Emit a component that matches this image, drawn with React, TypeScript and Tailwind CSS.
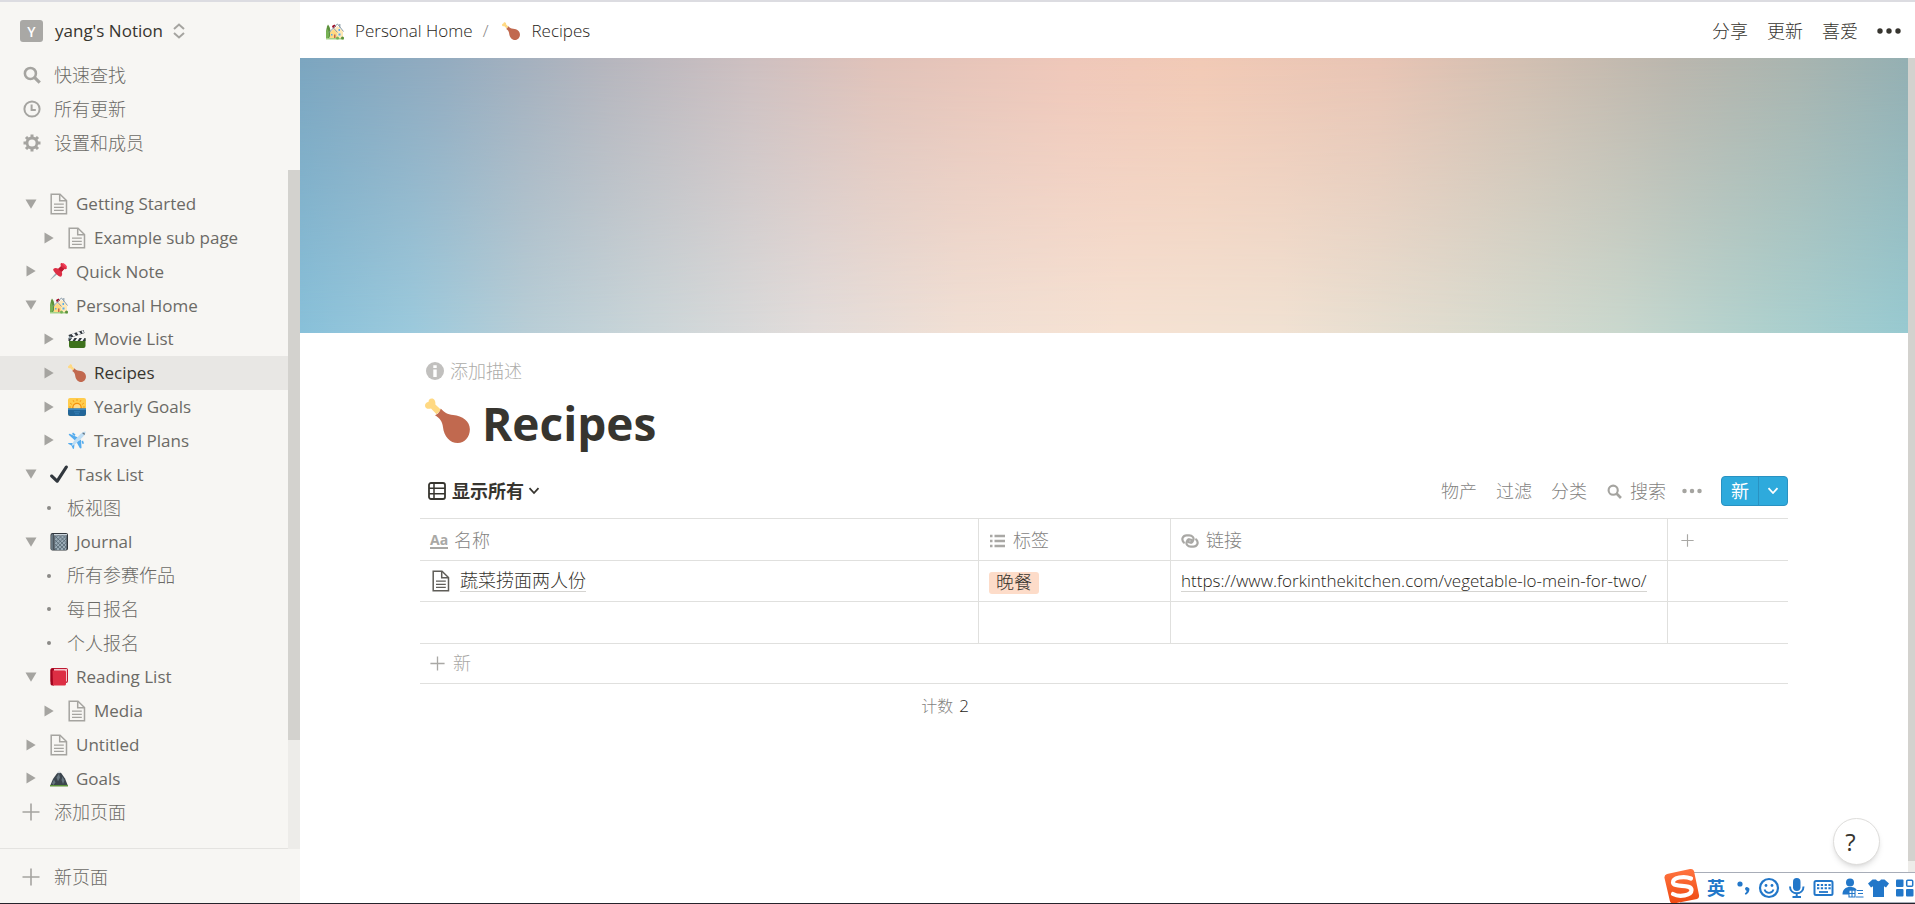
import type { ReactNode } from "react";

/* ---------- line icons ---------- */

const SearchIcon = ({ className }: { className: string }) => (
  <svg viewBox="0 0 17 17" className={className} fill="none" stroke="currentColor" aria-hidden="true">
    <circle cx="7" cy="7" r="5.2" strokeWidth="2.4" />
    <path d="M10.8 10.8 15.8 15.8" strokeWidth="3" />
  </svg>
);

const ClockIcon = () => (
  <svg viewBox="0 0 18 18" className="size-[18px]" fill="none" stroke="currentColor" aria-hidden="true">
    <circle cx="9" cy="9" r="7.6" strokeWidth="2" />
    <path d="M8.6 4.6V10H12.8" strokeWidth="2" />
  </svg>
);

const GearIcon = () => (
  <svg viewBox="0 0 18 18" className="size-[18px]" fill="none" stroke="currentColor" aria-hidden="true">
    <circle cx="9" cy="9" r="5" strokeWidth="2.8" />
    <path
      d="M9 .5V4M9 14v3.5M.5 9H4M14 9h3.500M3 3l2.400 2.400M12.600 12.600 15 15M3 15l2.400-2.400M12.600 5.400 15 3"
      strokeWidth="3"
    />
  </svg>
);

const PlusIcon = ({ className }: { className: string }) => (
  <svg viewBox="0 0 18 18" className={className} stroke="currentColor" strokeWidth="1.6" aria-hidden="true">
    <path d="M9 .5v17M.5 9h17" />
  </svg>
);

const PageIcon = ({ className }: { className: string }) => (
  <svg viewBox="0 0 18 22" className={className} fill="none" stroke="currentColor" strokeWidth="1.5" aria-hidden="true">
    <path d="M1.200 1.200H10l6.500 6.300V20.700H1.200Z" />
    <path d="M9.700 1.500V7.800H16.300" />
    <path d="M4 11.200h9.800M4 14.300h9.800M4 17.400h9.800" strokeWidth="1.3" />
  </svg>
);

const ArrowDown = () => (
  <svg viewBox="0 0 12 10" className="h-[10px] w-3" fill="currentColor" aria-hidden="true">
    <path d="M.5 .5h11L6 9.700Z" />
  </svg>
);

const ArrowRight = () => (
  <svg viewBox="0 0 10 12" className="ml-px h-3 w-[10px]" fill="currentColor" aria-hidden="true">
    <path d="M.5 .5v11L9.700 6Z" />
  </svg>
);

const Chevron = ({ className }: { className: string }) => (
  <svg viewBox="0 0 12 8" className={className} fill="none" stroke="currentColor" strokeWidth="1.8" aria-hidden="true">
    <path d="M1.500 1.200 6 6l4.500-4.800" />
  </svg>
);

const Dots = ({ className }: { className: string }) => (
  <svg viewBox="0 0 24 6" className={className} fill="currentColor" aria-hidden="true">
    <circle cx="3" cy="3" r="2.700" />
    <circle cx="12" cy="3" r="2.700" />
    <circle cx="21" cy="3" r="2.700" />
  </svg>
);

/* ---------- pictograms ---------- */

const emojiSize = "size-[18px] shrink-0";

const Drumstick = ({ className }: { className: string }) => (
  <svg viewBox="0 0 36 36" className={className} aria-hidden="true">
    <path
      fill="#ffd983"
      d="M13 9.500 8.300 5.200C8.700 2.500 7.400.3 5.400.3 3.700.3 2.700 1.500 2.800 3.200 1.100 3.300 0 4.600 0 6.200 0 8.300 2.300 9.200 4.800 8.400L9.200 13Z"
    />
    <path
      fill="#c1694f"
      d="M12.600 8.300c2.600 3 5.300 4.800 9.900 5.200C30 14 35.900 18.600 35.900 25c0 6.200-4.200 11-9.700 11-6.200 0-11.100-5.500-11.800-12.700-.4-4.200-2.500-7.200-6.600-9.700 1.600-.2 4.200-2.200 4.800-5.300Z"
    />
  </svg>
);

const House = () => (
  <svg viewBox="0 0 36 36" className={emojiSize} aria-hidden="true">
    <path fill="#a6d388" d="M0 31h36v4H0z" />
    <path fill="#5c913b" d="M4 5c3 3 5 9 5 16 0 5-1 9-3 11H1C-1 26 0 11 4 5Z" />
    <path fill="#77b255" d="M3 14c2 3 3 6 3 10 0 4-1 7-2 8H0V20c1-3 2-5 3-6Z" />
    <path fill="#ffe8b6" d="M13 18 23 8l11 11v13H13Z" />
    <path fill="#ffd983" d="M8 21l7-7 7 7v11H8Z" />
    <path fill="#a0041e" d="m12 8 5-3 3 4-6 4Z" />
    <path fill="#a7b3bc" d="M26 4h3v7h-3z" />
    <path fill="none" stroke="#8899a6" strokeWidth="2" d="m6 21 9-9 8 9M15 11l8-7 12 15" />
    <path fill="#55acee" d="M25 14h3v4h-3zM25 23h4v4h-4zM10 24h3v3h-3z" />
    <path fill="#c1694f" d="M16 25h3v7h-3z" />
    <circle cx="23" cy="32" r="3" fill="#77b255" />
    <circle cx="33" cy="32" r="3" fill="#5c913b" />
  </svg>
);

const Pin = () => (
  <svg viewBox="0 0 36 36" className={emojiSize} aria-hidden="true">
    <path fill="#99aab5" d="M15.500 17.500 1 34.500l-.5 1 1.500-.3 17-14.700Z" />
    <path
      fill="#dd2e44"
      d="M21.500 2.800c2-3.600 14.500 8 11.800 10.800-1.600 1-3.300.7-4.900.2l-4.900 5.500c1.400 4.400 1 8-1.500 9.900-3.100 2-17.900-11.700-15.300-15.400 2.600-2.600 6-2.300 9.900-.5L22 8.400c-.9-1.800-1.300-3.900-.5-5.600Z"
    />
    <path fill="#be1931" d="M16.600 13.300 22 8.400c2 2.200 4 4 6.400 5.400l-4.900 5.500c-2.800-1.400-5-3.300-6.900-6Z" />
    <ellipse cx="29.400" cy="6.400" rx="2" ry="6" transform="rotate(-45 29.400 6.400)" fill="#f4425c" />
  </svg>
);

const Clapper = () => (
  <svg viewBox="0 0 36 36" className={emojiSize} aria-hidden="true">
    <path fill="#3e721d" d="M2 17h33v15a4 4 0 0 1-4 4H5a4 4 0 0 1-3-4Z" />
    <path fill="#31373d" d="M1 10 31 0l2 6L3 16ZM1 16h34v6H1Z" />
    <path fill="#f5f8fa" d="m7 8 5-2 4 5-5 2ZM17 5l5-2 4 5-5 2ZM27 1.500l3-1 2 5-3 1ZM8 16h5l-4 6H4ZM18 16h5l-4 6h-5ZM28 16h5l-4 6h-5Z" />
    <circle cx="4" cy="15" r="2.500" fill="#99aab5" />
  </svg>
);

const Sunrise = () => (
  <svg viewBox="0 0 36 36" className={emojiSize} aria-hidden="true">
    <rect width="36" height="36" rx="4" fill="#ffcc4d" />
    <path fill="none" stroke="#f4900c" strokeWidth="1.500" d="M18 2v4M10 4l2 4M26 4l-2 4M4 10l4 3M32 10l-4 3M2 18h4M34 18h-4" />
    <circle cx="18" cy="19" r="9.500" fill="#f4900c" />
    <circle cx="18" cy="19" r="7" fill="#ffd983" />
    <path fill="#226699" d="M0 21h36v11a4 4 0 0 1-4 4H4a4 4 0 0 1-4-4Z" />
    <path fill="#3b88c3" d="M0 21h36v3H0z" />
    <path fill="#55acee" d="M12 27h12v1.500H12zM14 31h8v1.500h-8z" opacity=".5" />
  </svg>
);

const Plane = () => (
  <svg viewBox="0 0 36 36" className={emojiSize} aria-hidden="true">
    <path fill="#55acee" d="M20 13 3 5.500c-1.500 0-2 2-.5 3L14 19ZM17 22l6.500 12c1 1.500 3.500 1 3.500-1L26 17ZM9 24H1.500c-1.500 0-2 1.500-.5 2l6 3 2.500 6c.5 1.500 2.500 1 2.500-.5L13 27Z" />
    <path fill="#bdddf4" d="M8 29c-1-1 1-5 4-9L25 6c4-4 9-5.500 10-5 .8 1-.8 6-5 10.500L16 25c-4 3-7 5-8 4Z" />
    <path fill="#66757f" d="M28 4c2-1 4-1 5 0s.5 3-.5 4.500c-1-2-2.500-3.500-4.500-4.500Z" />
    <path fill="#55acee" d="m8 6 2-3 5 4-2 3ZM27 21l3-2 2 6-3 1Z" />
  </svg>
);

const Check = () => (
  <svg viewBox="0 0 36 36" className={emojiSize} aria-hidden="true">
    <path
      fill="#31373d"
      d="M34.500 1.500c-1.400-1-3.300-.7-4.200.7L13.700 27.500 5.300 19.700c-1.300-1.200-3.200-1.100-4.400.1-1.100 1.300-1.100 3.200.1 4.400l11.500 10.600c1.400 1.300 3.400.8 4.300-.5L35.400 5.700c.9-1.400.5-3.300-.9-4.200Z"
    />
  </svg>
);

const Notebook = () => (
  <svg viewBox="0 0 36 36" className={emojiSize} aria-hidden="true">
    <rect x="1" y="0" width="35" height="35" rx="4" fill="#31373d" />
    <path fill="#ccd6dd" d="M8 2h26v3H8z" />
    <path fill="#66757f" d="M2 5c0-2 2-3 3-3h2v32H4c-1 0-2-1-2-2Z" />
    <rect x="9" y="5" width="24" height="29" rx="2" fill="#99aab5" />
    <path stroke="#546572" strokeWidth="1.500" fill="none" d="m9 12 7-7M9 20 24 5M9 28 32 5M10 34l23-23M18 34l15-15M26 34l7-7M26 5l7 7M18 5l15 15M10 6l23 23M9 13l21 21M9 21l13 13M9 29l5 5" />
  </svg>
);

const RedBook = () => (
  <svg viewBox="0 0 36 36" className={emojiSize} aria-hidden="true">
    <rect x="1" y="0" width="35" height="30" rx="4" fill="#be1931" />
    <path fill="#f5c6ce" d="M7 2h27v25H7z" />
    <path fill="#a0041e" d="M1 4c0-2 2-3 4-3h3v34H5c-2 0-4-1-4-4Z" />
    <path fill="#dd2e44" d="M5 5h24a3 3 0 0 1 3 3v24a3 3 0 0 1-3 3H6Z" />
  </svg>
);

const Mountain = () => (
  <svg viewBox="0 0 36 36" className={emojiSize} aria-hidden="true">
    <path fill="#3b454d" d="M0 34 6 20 13 10l5-5 5 4 7 10 6 15Z" />
    <path fill="#e1e8ed" d="m18 3 4 5-2-1-2 2-2-2-3 3Z" />
    <path fill="#66757f" d="m18 9 2 8-4 8-3-8ZM25 15l4 8-3 7-3-8ZM8 21l3 6-4 5-3-3Z" />
    <path fill="#5c913b" d="M0 32h36v3H0z" />
  </svg>
);

const TreePage = () => <PageIcon className="h-[22px] w-[18px] shrink-0" />;

/* ---------- sidebar ---------- */

type Item = {
  label: string;
  icon?: ReactNode;
  state: "open" | "closed" | "view";
  nested?: boolean;
  active?: boolean;
};

const items: Item[] = [
  { label: "Getting Started", icon: <TreePage />, state: "open" },
  { label: "Example sub page", icon: <TreePage />, state: "closed", nested: true },
  { label: "Quick Note", icon: <Pin />, state: "closed" },
  { label: "Personal Home", icon: <House />, state: "open" },
  { label: "Movie List", icon: <Clapper />, state: "closed", nested: true },
  { label: "Recipes", icon: <Drumstick className={emojiSize} />, state: "closed", nested: true, active: true },
  { label: "Yearly Goals", icon: <Sunrise />, state: "closed", nested: true },
  { label: "Travel Plans", icon: <Plane />, state: "closed", nested: true },
  { label: "Task List", icon: <Check />, state: "open" },
  { label: "板视图", state: "view" },
  { label: "Journal", icon: <Notebook />, state: "open" },
  { label: "所有参赛作品", state: "view" },
  { label: "每日报名", state: "view" },
  { label: "个人报名", state: "view" },
  { label: "Reading List", icon: <RedBook />, state: "open" },
  { label: "Media", icon: <TreePage />, state: "closed", nested: true },
  { label: "Untitled", icon: <TreePage />, state: "closed" },
  { label: "Goals", icon: <Mountain />, state: "closed" },
];

function TreeRow({ item }: { item: Item }) {
  if (item.state === "view") {
    return (
      <li className="flex flex-1">
        <a href="#view" className="flex w-full items-center pl-[47px] text-[18px] font-light">
          <span className="mr-4 size-1 rounded-full bg-[#8b8a87]" />
          {item.label}
        </a>
      </li>
    );
  }
  return (
    <li className={item.active ? "flex flex-1 bg-[#e8e7e4]" : "flex flex-1"}>
      <button
        type="button"
        aria-label={"Toggle " + item.label}
        className={
          item.nested
            ? "flex w-[68px] shrink-0 items-center pl-[43px] text-[#a5a4a0]"
            : "flex w-[50px] shrink-0 items-center pl-[25px] text-[#a5a4a0]"
        }
      >
        {item.state === "open" ? <ArrowDown /> : <ArrowRight />}
      </button>
      <a href="#page" className="flex flex-1 items-center gap-2 text-[#a5a4a0]">
        {item.icon}
        <span className={item.active ? "font-medium text-[#37352f]" : "text-[#6b6a66]"}>{item.label}</span>
      </a>
    </li>
  );
}

function QuickLink({ icon, label }: { icon: ReactNode; label: string }) {
  return (
    <button type="button" className="flex h-[34px] w-full items-center text-left">
      <span className="flex w-[54px] items-center pl-[23px] text-[#a5a4a0]">{icon}</span>
      <span className="text-[18px] font-light">{label}</span>
    </button>
  );
}

function Sidebar() {
  return (
    <aside className="flex w-[300px] shrink-0 flex-col bg-[#f7f6f3] text-[#6b6a66]">
      <button type="button" className="flex h-14 items-center pt-[2px] pl-5 text-left">
        <span className="flex h-[22px] w-[23px] items-center justify-center rounded-[3px] bg-[#a9a8a5] text-[14px] font-semibold text-white">
          Y
        </span>
        <span className="ml-3 font-medium text-[#37352f]">yang's Notion</span>
        <svg viewBox="0 0 12 16" className="ml-[10px] h-4 w-3" fill="none" stroke="#a5a4a0" strokeWidth="2" aria-hidden="true">
          <path d="M1 6l5-4.500L11 6M1 10l5 4.500L11 10" />
        </svg>
      </button>
      <nav aria-label="Quick links">
        <QuickLink icon={<SearchIcon className="size-[18px]" />} label="快速查找" />
        <QuickLink icon={<ClockIcon />} label="所有更新" />
        <QuickLink icon={<GearIcon />} label="设置和成员" />
      </nav>
      <div className="mt-[10px] flex min-h-0 flex-1">
        <div className="flex flex-1 flex-col border-b border-[#e4e3e0] pt-[17px] pb-[19px]">
          <ul className="flex flex-[18] flex-col">
            {items.map((item) => (
              <TreeRow key={item.label} item={item} />
            ))}
          </ul>
          <button type="button" className="flex flex-1 items-center text-left">
            <span className="w-[54px] pl-[22px] text-[#a5a4a0]">
              <PlusIcon className="size-[18px]" />
            </span>
            <span className="text-[18px] font-light">添加页面</span>
          </button>
        </div>
        <div className="w-3 bg-[#edece9]">
          <div className="h-[84%] bg-[#d3d2ce]" />
        </div>
      </div>
      <button type="button" className="flex h-[54px] items-center pt-[2px] text-left">
        <span className="w-[54px] pl-[22px] text-[#a5a4a0]">
          <PlusIcon className="size-[18px]" />
        </span>
        <span className="text-[18px] font-light">新页面</span>
      </button>
    </aside>
  );
}

/* ---------- main area ---------- */

function TopBar() {
  return (
    <header className="flex h-14 shrink-0 items-center bg-white pt-[2px] pr-[14px] pl-[26px] text-[#37352f]">
      <a href="#home" className="flex items-center gap-[11px] font-light text-[#1f1d18]">
        <House />
        Personal Home
      </a>
      <span className="mx-[10px] font-light text-[#84837f]">/</span>
      <a href="#recipes" className="ml-1 flex items-center gap-[11px] font-light text-[#1f1d18]">
        <Drumstick className={emojiSize} />
        Recipes
      </a>
      <div className="ml-auto flex items-center gap-[19px] text-[18px] font-light">
        <button type="button">分享</button>
        <button type="button">更新</button>
        <button type="button">喜爱</button>
        <button type="button" aria-label="More">
          <Dots className="h-6 w-6" />
        </button>
      </div>
    </header>
  );
}

function Cover() {
  return (
    <div className="h-[275px] bg-[linear-gradient(90deg,#89c1da_0%,#9ccadd_7%,#b8ced7_14%,#ccd6d9_22%,#e3dddb_32%,#f1e0d5_41%,#f6e2d3_51%,#f1e2d3_61%,#e0ddd0_71%,#cad8ce_82%,#afd1ce_91%,#98cad1_100%)]">
      <div className="h-full bg-[linear-gradient(90deg,#7ba5bf_0%,#93abbf_9%,#b5b5bd_19%,#cdbfc0_28%,#e0c2b9_36%,#efc7b9_48%,#f1c9b5_56%,#e8c4b4_67%,#d2bfb1_76%,#bbb6ad_85%,#a9b4af_93%,#94afb2_100%)] [mask-image:linear-gradient(to_bottom,black,transparent)]" />
    </div>
  );
}

function Toolbar() {
  return (
    <div className="flex h-[54px] items-center text-[18px] font-light text-[#84837f]">
      <button type="button" className="flex items-center pl-2 text-[#37352f]">
        <svg viewBox="0 0 18 18" className="size-[18px]" fill="none" stroke="currentColor" strokeWidth="1.800" aria-hidden="true">
          <rect x="1" y="1" width="16" height="16" rx="2" />
          <path d="M6 1v16M1 6.300h16M1 11.700h16" strokeWidth="1.500" />
        </svg>
        <span className="ml-[6px] font-bold">显示所有</span>
        <Chevron className="ml-1 h-2 w-3" />
      </button>
      <div className="ml-auto flex items-center">
        <button type="button" className="mr-[19px]">物产</button>
        <button type="button" className="mr-[19px]">过滤</button>
        <button type="button" className="mr-5">分类</button>
        <button type="button" className="mr-4 flex items-center gap-2">
          <SearchIcon className="size-[15px] text-[#a5a4a0]" />
          搜索
        </button>
        <button type="button" aria-label="More view options" className="mr-[19px] text-[#a5a4a0]">
          <Dots className="h-5 w-5" />
        </button>
        <div className="flex h-[30px] overflow-hidden rounded-[4px] border border-[#2992c2] bg-[#2eaadc] text-white">
          <button type="button" className="w-[37px] border-r border-[#2992c2] font-normal">
            新
          </button>
          <button type="button" aria-label="New from template" className="flex w-[28px] items-center justify-center">
            <Chevron className="h-2 w-3" />
          </button>
        </div>
      </div>
    </div>
  );
}

const headCell = "border-r border-b border-[#e0e0de] p-0 pt-[2px] text-left font-light";
const bodyCell = "h-[41px] border-r border-b border-[#e0e0de] p-0";

function RecipesTable() {
  return (
    <table className="w-full table-fixed border-separate border-spacing-0 border-t border-[#e0e0de]">
      <colgroup>
        <col />
        <col className="w-[192px]" />
        <col className="w-[497px]" />
        <col className="w-[120px]" />
      </colgroup>
      <thead className="text-[18px] text-[#84837f]">
        <tr className="h-[42px]">
          <th scope="col" className={headCell}>
            <span className="flex items-center gap-[6px] pl-[10px]">
              <span className="w-[18px] border-b-2 border-[#a9a8a5] text-[14px] leading-[14px] font-bold text-[#a9a8a5]">Aa</span>
              名称
            </span>
          </th>
          <th scope="col" className={headCell}>
            <span className="flex items-center gap-2 pl-[11px]">
              <svg viewBox="0 0 15 14" className="h-[14px] w-[15px]" fill="none" stroke="#a9a8a5" strokeWidth="2.400" aria-hidden="true">
                <path d="M0 2h2.500M4.500 2H15M0 7h2.500M4.500 7H15M0 12h2.500M4.500 12H15" />
              </svg>
              标签
            </span>
          </th>
          <th scope="col" className={headCell}>
            <span className="flex items-center gap-[7px] pl-[10px]">
              <svg viewBox="0 0 18 14" className="h-[14px] w-[18px]" fill="none" stroke="#a9a8a5" strokeWidth="2.200" strokeLinecap="round" aria-hidden="true">
                <path d="M2.800 8.600C-.2 5.200 2 1.400 5.600 1.400h2.600c3 0 5.200 2.400 4 4.800-.9 1.900-3.600 3-5.200 1.500-1-.9-.4-2.200.8-2.500" />
                <path d="M15.200 5.400c3 3.400.8 7.200-2.800 7.200H9.800c-3 0-5.200-2.400-4-4.800.9-1.900 3.600-3 5.200-1.500 1 .9.4 2.200-.8 2.500" />
              </svg>
              链接
            </span>
          </th>
          <th className="border-b border-[#e0e0de] p-0 pt-[2px] text-left">
            <button type="button" aria-label="Add column" className="flex pl-[13px] text-[#a9a8a5]">
              <PlusIcon className="size-[13px]" />
            </button>
          </th>
        </tr>
      </thead>
      <tbody className="text-[#37352f]">
        <tr>
          <td className={bodyCell}>
            <a href="#recipe" className="flex items-center gap-[10px] pl-3 text-[18px] font-light">
              <PageIcon className="h-[22px] w-[18px] text-[#5f5d58]" />
              <span className="border-b border-[#d5d4d1] leading-[21px]">蔬菜捞面两人份</span>
            </a>
          </td>
          <td className={bodyCell}>
            <span className="ml-[10px] inline-flex h-[22px] items-center rounded-[3px] bg-[#fddcc9] px-[7px] align-middle text-[18px] font-light">
              晚餐
            </span>
          </td>
          <td className={bodyCell + " overflow-hidden whitespace-nowrap"}>
            <a
              href="https://www.forkinthekitchen.com/vegetable-lo-mein-for-two/"
              className="ml-[10px] inline-block border-b border-[#d5d4d1] leading-[20px] font-light text-[#1f1d18]"
            >
              https://www.forkinthekitchen.com/vegetable-lo-mein-for-two/
            </a>
          </td>
          <td className="border-b border-[#e0e0de]" />
        </tr>
        <tr>
          <td className="h-[42px] border-r border-b border-[#e0e0de]" />
          <td className="border-r border-b border-[#e0e0de]" />
          <td className="border-r border-b border-[#e0e0de]" />
          <td className="border-b border-[#e0e0de]" />
        </tr>
        <tr>
          <td colSpan={4} className="h-10 border-b border-[#e0e0de] p-0">
            <button type="button" className="flex items-center gap-2 pl-[10px] text-[18px] font-light text-[#a9a8a5]">
              <PlusIcon className="size-[15px]" />新
            </button>
          </td>
        </tr>
      </tbody>
      <tfoot>
        <tr>
          <td className="h-11 p-0 pr-[10px] text-right font-light text-[#1f1d18]">
            <span className="mr-[6px] text-[16px] text-[#84837f]">计数</span>2
          </td>
          <td colSpan={3} />
        </tr>
      </tfoot>
    </table>
  );
}

/* ---------- input method bar ---------- */

function InputBar() {
  return (
    <div className="absolute right-0 bottom-0 flex h-[31px] w-[235px] items-center border-t border-b border-[#a8adb8] bg-white pl-[27px] text-[#2277c9]">
      <svg viewBox="0 0 38 36" className="absolute bottom-[-2px] left-[-17px] h-9 w-[38px]" aria-hidden="true">
        <defs>
          <linearGradient id="ime" x1="0" y1="0" x2="0" y2="1">
            <stop offset="0" stopColor="#ff7440" />
            <stop offset="1" stopColor="#ee4a12" />
          </linearGradient>
        </defs>
        <path fill="url(#ime)" d="M4 6 27 1q3-.6 4 2l5 24q.5 3-2 4L11 35.500q-3 .6-4-2L1.500 10Q1 7 4 6Z" />
        <path
          d="M28 10.500C21 7.500 9.500 9.500 10 14.500c.6 5.500 18.500 1 18.500 7.500 0 5.500-12 7.500-18.500 4"
          fill="none"
          stroke="white"
          strokeWidth="4.200"
          strokeLinecap="round"
        />
      </svg>
      <span className="w-[29px] text-[18px] leading-none font-bold">英</span>
      <svg viewBox="0 0 179 30" className="h-[30px] w-[179px] shrink-0" fill="currentColor" aria-hidden="true">
        <circle cx="4" cy="11" r="2.600" />
        <path d="M9 15.500a2.300 2.300 0 1 1 4.200 2.200c-.6 2-2 3.400-3.700 4l-.7-1.300c1.200-.6 1.800-1.500 1.800-2.600-.9-.4-1.600-1.300-1.600-2.300Z" />
        <circle cx="33" cy="15" r="9" fill="none" stroke="currentColor" strokeWidth="2.200" />
        <circle cx="30" cy="12.500" r="1.400" />
        <circle cx="36" cy="12.500" r="1.400" />
        <path d="M28.500 16.500c1.500 4.500 7.500 4.500 9 0" fill="none" stroke="currentColor" strokeWidth="1.800" />
        <rect x="57" y="5" width="7.500" height="13" rx="3.700" />
        <path d="M54 13.500c0 9 13.500 9 13.500 0M60.700 20.500v3.500M56.500 24h8.500" fill="none" stroke="currentColor" strokeWidth="2" />
        <rect x="78.500" y="8" width="18" height="14" rx="1.500" fill="none" stroke="currentColor" strokeWidth="2" />
        <path d="M81 12h14M81 15.300h14" stroke="currentColor" strokeWidth="2" strokeDasharray="2.300 1.500" />
        <path d="M83 19h9" stroke="currentColor" strokeWidth="1.800" />
        <circle cx="114" cy="9.500" r="4" />
        <path d="M106.500 21.500c0-5 3-7.500 7.500-7.500s6 1.500 7 3.500h-8v4Z" />
        <path d="M113 17h6v7h-6ZM116 17v7M113 20.500h6M121 17.500h6M122 20.500h5M120 24h7.500" fill="none" stroke="currentColor" strokeWidth="1.100" />
        <path d="M136.500 6.500h3.500c1.500 2.200 3.500 2.200 5 0h3.500l4.500 4-3 4-2-1.300V24h-11V13.200l-2 1.300-3-4Z" />
        <rect x="160" y="6.500" width="7.500" height="7.500" rx="1" />
        <rect x="160" y="16" width="7.500" height="7.500" rx="1" />
        <rect x="170" y="16" width="7.500" height="7.500" rx="1" />
        <rect x="170.700" y="7.200" width="6" height="6" rx="1" fill="none" stroke="currentColor" strokeWidth="1.500" />
      </svg>
    </div>
  );
}

export default function App() {
  return (
    <div className="relative flex h-screen overflow-hidden border-t-2 border-b border-t-[#dcdce1] border-b-[#26242c] bg-white font-['Open_Sans','Noto_Sans_CJK_SC',sans-serif] text-[17px]">
      <Sidebar />
      <main className="flex min-w-0 flex-1 flex-col">
        <TopBar />
        <div className="flex min-h-0 flex-1">
          <div className="min-w-0 flex-1">
            <Cover />
            <div className="px-[120px] pt-[22px]">
              <button type="button" className="flex h-8 items-center gap-[6px] pl-[6px] text-[18px] font-light text-[#acaba8]">
                <svg viewBox="0 0 18 18" className="size-[18px]" aria-hidden="true">
                  <circle cx="9" cy="9" r="9" fill="#c1c0be" />
                  <path fill="white" d="M7.300 7.500h3.400V15H7.300zM7.300 3.200h3.400v2.800H7.300z" />
                </svg>
                添加描述
              </button>
              <div className="flex h-[77px] items-start gap-3 pt-[11px] pl-[5px]">
                <Drumstick className="size-[45px] shrink-0" />
                <h1 className="text-[46px] leading-[50px] font-bold text-[#37352f]">Recipes</h1>
              </div>
              <Toolbar />
              <RecipesTable />
            </div>
          </div>
          <div className="w-[7px] bg-[#edece9]">
            <div className="h-[95%] bg-[#d3d2ce]" />
          </div>
        </div>
      </main>
      <button
        type="button"
        aria-label="Help"
        className="absolute right-[35px] bottom-[38px] size-[47px] rounded-full border border-[#dedddb] bg-white pr-3 text-[24px] text-[#37352f] shadow-md"
      >
        ?
      </button>
      <InputBar />
    </div>
  );
}
